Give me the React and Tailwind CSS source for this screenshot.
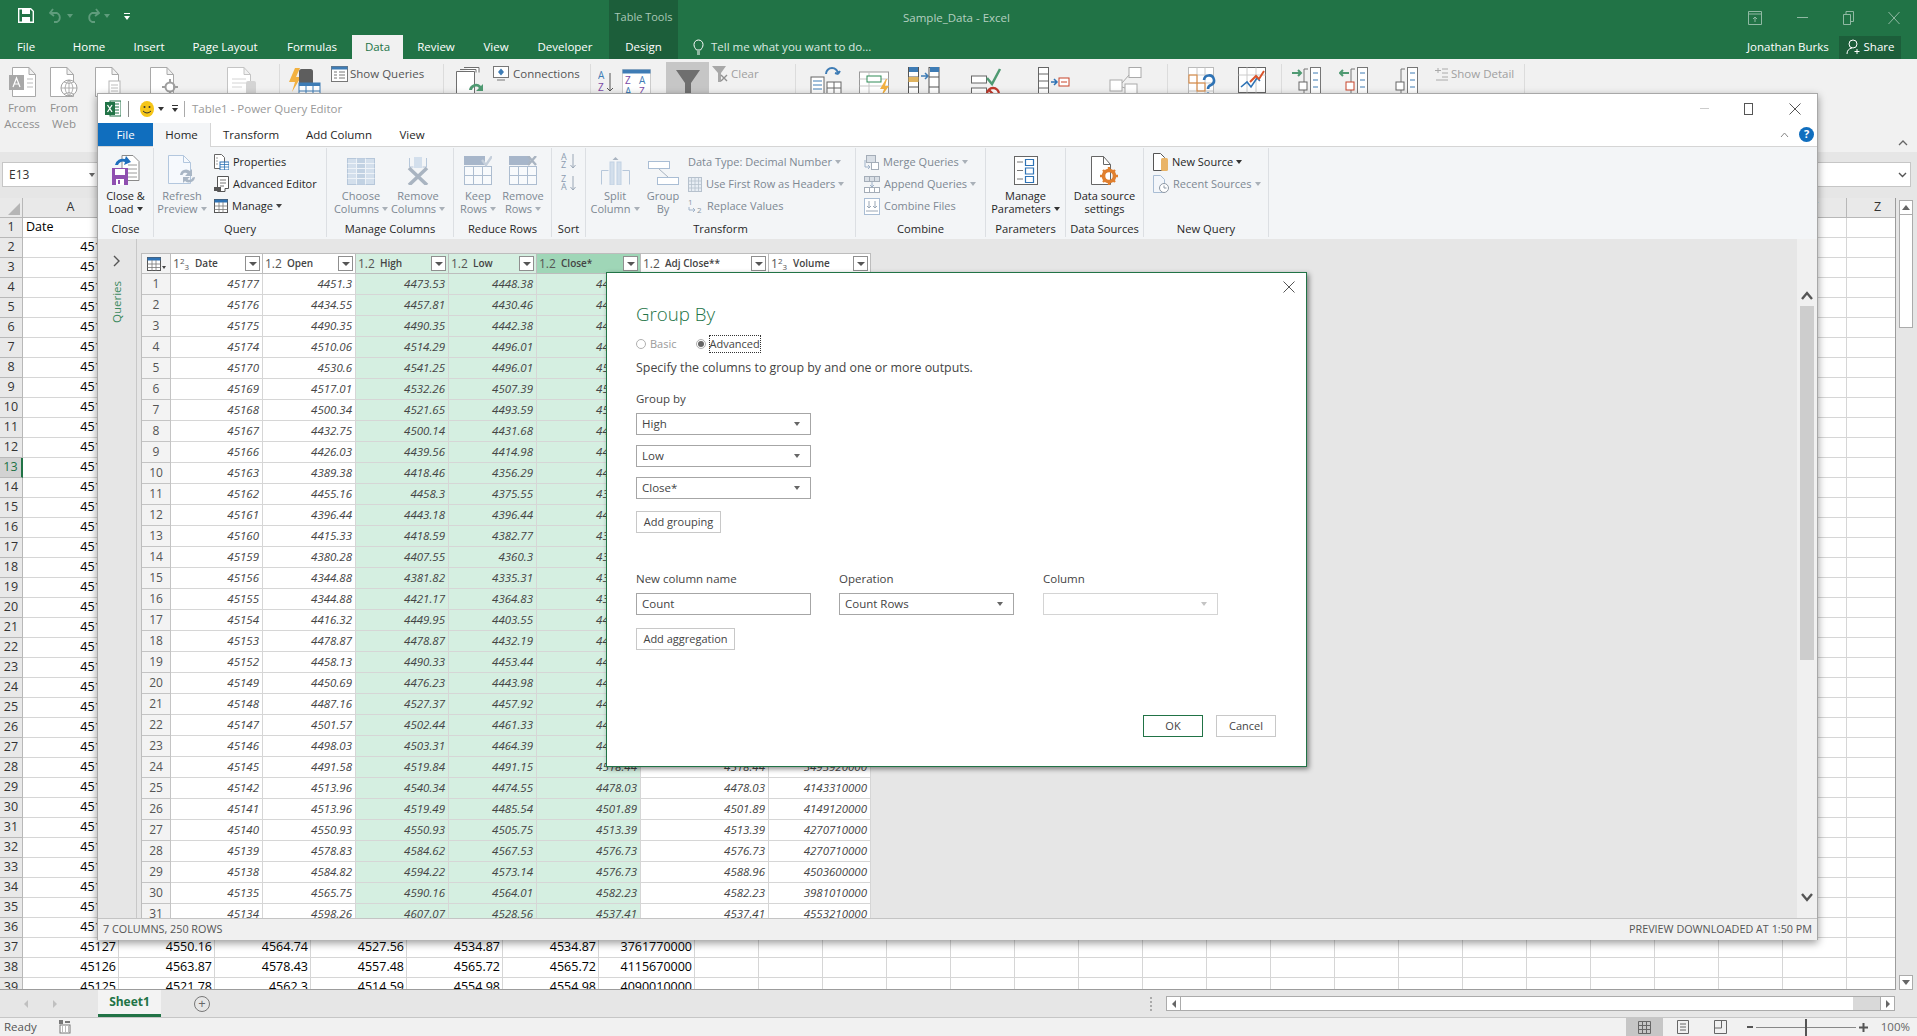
import React from 'react';

// Power Query "Group By" dialog on top of Excel

const gridRows = [
  [45177, '4451.3', '4473.53', '4448.38', '4457.49', '4457.49', '3259290000'],
  [45176, '4434.55', '4457.81', '4430.46', '4451.14', '4451.14', '3763760000'],
  [45175, '4490.35', '4490.35', '4442.38', '4465.48', '4465.48', '3306140000'],
  [45174, '4510.06', '4514.29', '4496.01', '4496.83', '4496.83', '3526250000'],
  [45170, '4530.6', '4541.25', '4496.01', '4515.77', '4515.77', '3246260000'],
  [45169, '4517.01', '4532.26', '4507.39', '4507.66', '4507.66', '4244900000'],
  [45168, '4500.34', '4521.65', '4493.59', '4514.87', '4514.87', '3064110000'],
  [45167, '4432.75', '4500.14', '4431.68', '4497.63', '4497.63', '3354820000'],
  [45166, '4426.03', '4439.56', '4414.98', '4433.31', '4433.31', '2957230000'],
  [45163, '4389.38', '4418.46', '4356.29', '4405.71', '4405.71', '3296180000'],
  [45162, '4455.16', '4458.3', '4375.55', '4376.31', '4376.31', '3723470000'],
  [45161, '4396.44', '4443.18', '4396.44', '4436.01', '4436.01', '3837270000'],
  [45160, '4415.33', '4418.59', '4382.77', '4387.55', '4387.55', '3522760000'],
  [45159, '4380.28', '4407.55', '4360.3', '4399.77', '4399.77', '3726850000'],
  [45156, '4344.88', '4381.82', '4335.31', '4369.71', '4369.71', '3940400000'],
  [45155, '4344.88', '4421.17', '4364.83', '4370.36', '4370.36', '3936770000'],
  [45154, '4416.32', '4449.95', '4403.55', '4404.33', '4404.33', '3753290000'],
  [45153, '4478.87', '4478.87', '4432.19', '4437.86', '4437.86', '3610950000'],
  [45152, '4458.13', '4490.33', '4453.44', '4489.72', '4489.72', '3193760000'],
  [45149, '4450.69', '4476.23', '4443.98', '4464.05', '4464.05', '3753290000'],
  [45148, '4487.16', '4527.37', '4457.92', '4468.83', '4468.83', '4107360000'],
  [45147, '4501.57', '4502.44', '4461.33', '4467.71', '4467.71', '3803100000'],
  [45146, '4498.03', '4503.31', '4464.39', '4499.38', '4499.38', '3884910000'],
  [45145, '4491.58', '4519.84', '4491.15', '4518.44', '4518.44', '3493920000'],
  [45142, '4513.96', '4540.34', '4474.55', '4478.03', '4478.03', '4143310000'],
  [45141, '4513.96', '4519.49', '4485.54', '4501.89', '4501.89', '4149120000'],
  [45140, '4550.93', '4550.93', '4505.75', '4513.39', '4513.39', '4270710000'],
  [45139, '4578.83', '4584.62', '4567.53', '4576.73', '4576.73', '4270710000'],
  [45138, '4584.82', '4594.22', '4573.14', '4576.73', '4588.96', '4503600000'],
  [45135, '4565.75', '4590.16', '4564.01', '4582.23', '4582.23', '3981010000'],
  [45134, '4598.26', '4607.07', '4528.56', '4537.41', '4537.41', '4553210000'],
];

const sheetTail = {
  37: ['45127', '4550.16', '4564.74', '4527.56', '4534.87', '4534.87', '3761770000'],
  38: ['45126', '4563.87', '4578.43', '4557.48', '4565.72', '4565.72', '4115670000'],
  39: ['45125', '4521.78', '4562.3', '4514.59', '4554.98', '4554.98', '4090010000'],
};

const letters = 'ABCDEFGHIJKLMNOPQRSTUVWXYZ'.split('');

const Caret = ({ c = '#444' }) => (
  <svg width="6" height="4" viewBox="0 0 6 4" className="ml-[3px] inline-block shrink-0 align-middle">
    <path d="M0 0h6L3 4z" fill={c} />
  </svg>
);

/* ---------- Excel ribbon drawings ---------- */
const PageOutline = ({ w = 24, h = 30, c = '#a9a9a9', fill = '#fff' }) => (
  <path d={`M.5.5H${w - 7}L${w - .5} 7.5V${h - .5}H.5Z M${w - 7} .5V7.5H${w - .5}`} fill={fill} stroke={c} />
);

const FromAccess = () => (
  <svg width="27" height="30" viewBox="0 0 27 30">
    <g transform="translate(3 0)"><PageOutline /></g>
    <rect y="8" width="15" height="15" fill="#a8a8a8" />
    <path d="M4 20 7.5 11 11 20M5.5 17h4" stroke="#fff" strokeWidth="1.2" fill="none" />
    <path d="M18 12h6M18 16h6M18 20h6" stroke="#bbb" />
  </svg>
);
const FromWeb = () => (
  <svg width="29" height="30" viewBox="0 0 29 30">
    <PageOutline />
    <circle cx="19" cy="21" r="8" fill="#fff" stroke="#a0a0a0" />
    <path d="M11 21h16M19 13v16M14 15q5 3 10 0M14 27q5-3 10 0M19 13q-8 8 0 16q8-8 0-16" stroke="#a0a0a0" fill="none" strokeWidth=".8" />
  </svg>
);
const FromText = () => (
  <svg width="27" height="30" viewBox="0 0 27 30">
    <PageOutline />
    <rect x="14" y="14" width="11" height="14" fill="#fff" stroke="#b5b5b5" />
    <path d="M16 18h7M16 21h7M16 24h7" stroke="#bdbdbd" />
  </svg>
);
const FromOther = () => (
  <svg width="28" height="30" viewBox="0 0 28 30">
    <PageOutline />
    <circle cx="20" cy="20" r="4.5" fill="none" stroke="#9f9f9f" strokeWidth="2" />
    <path d="M20 12v3M20 25v3M12 20h3M25 20h3" stroke="#9f9f9f" strokeWidth="2" />
  </svg>
);
const Existing = () => (
  <svg width="30" height="30" viewBox="0 0 30 30">
    <PageOutline c="#c4c4c4" />
    <path d="M5 12h14M5 16h14M5 20h10" stroke="#d4d4d4" />
    <rect x="19" y="14" width="10" height="15" rx="2" fill="#d4d4d4" />
  </svg>
);
const NewQuery = () => (
  <svg width="33" height="30" viewBox="0 0 33 30">
    <path d="M7 1 1 15h6l-3 10 9-15H8l4-9z" fill="#f2b141" />
    <rect x="11" y="2" width="14" height="18" rx="2.5" fill="#5e5e5e" />
    <rect x="11" y="16" width="21" height="14" fill="#fff" stroke="#3e7cb5" />
    <rect x="11" y="16" width="21" height="3" fill="#3e7cb5" />
    <path d="M18 19v11M25 19v11M11 24h21" stroke="#3e7cb5" />
  </svg>
);
const ShowQ = () => (
  <svg width="17" height="16" viewBox="0 0 17 16">
    <rect x=".5" y=".5" width="16" height="15" fill="#fff" stroke="#777" />
    <rect x=".5" y=".5" width="16" height="3" fill="#3e7cb5" />
    <path d="M3 6h3M3 9h3M3 12h3M8 6h6M8 9h6M8 12h6" stroke="#777" />
  </svg>
);
const RefreshAll = () => (
  <svg width="31" height="30" viewBox="0 0 31 30">
    <path d="M.5 4.5h18v25H.5zM4 2.5h16v3M8 .5h15v5" fill="#fff" stroke="#6f6f6f" />
    <path d="M13 23a7 7 0 0 1 12-4l2-2v7h-7l3-3a4 4 0 0 0-7 2z" fill="#4f9a72" />
  </svg>
);
const Conn = () => (
  <svg width="16" height="15" viewBox="0 0 16 15">
    <rect x=".5" y=".5" width="15" height="11" fill="#fff" stroke="#777" />
    <path d="M8 2.5 11 6 8 9.5 5 6z" fill="#3e7cb5" />
    <path d="M4 14h8" stroke="#777" />
  </svg>
);
const SortAz = () => (
  <svg width="16" height="26" viewBox="0 0 16 26">
    <text x="0" y="10" fontSize="10" fontFamily="Open Sans" fill="#3e7cb5">A</text>
    <text x="0" y="22" fontSize="10" fontFamily="Open Sans" fill="#7a4aa5">Z</text>
    <path d="M12 4v18M9 19l3 3 3-3" stroke="#555" fill="none" />
  </svg>
);
const SortBox = () => (
  <svg width="29" height="28" viewBox="0 0 29 28">
    <rect x=".5" y=".5" width="28" height="27" fill="#fff" stroke="#ccc" />
    <rect x=".5" y=".5" width="28" height="4" fill="#3e7cb5" />
    <text x="3" y="15" fontSize="10" fontFamily="Open Sans" fill="#7a4aa5">Z</text>
    <text x="3" y="26" fontSize="10" fontFamily="Open Sans" fill="#3e7cb5">A</text>
    <text x="17" y="15" fontSize="10" fontFamily="Open Sans" fill="#3e7cb5">A</text>
    <text x="17" y="26" fontSize="10" fontFamily="Open Sans" fill="#7a4aa5">Z</text>
  </svg>
);
const Funnel = () => (
  <svg width="28" height="30" viewBox="0 0 28 30">
    <path d="M2 2h24L17 15v15h-6V15z" fill="#6f6f6f" />
  </svg>
);
const ClearF = () => (
  <svg width="16" height="16" viewBox="0 0 16 16">
    <path d="M0 0h14L9 7v9H6V7z" fill="#a8a8a8" />
    <path d="M9 9l6 6M15 9l-6 6" stroke="#8f8f8f" strokeWidth="1.4" />
  </svg>
);
const DataTool = ({ kind }) => {
  if (kind === 'text') return (
    <svg width="34" height="30" viewBox="0 0 34 30">
      <path d="M16 7a6 6 0 0 1 12 0M28 7l-3-1M28 7l2-3" stroke="#3e7cb5" strokeWidth="2" fill="none" />
      <rect x="1" y="10" width="13" height="19" fill="#fff" stroke="#666" />
      <path d="M3 14h9M3 18h9M3 22h9" stroke="#3e7cb5" />
      <rect x="17" y="15" width="14" height="12" fill="#fff" stroke="#666" />
      <path d="M17 21h14M24 15v12" stroke="#666" />
    </svg>
  );
  if (kind === 'flash') return (
    <svg width="32" height="30" viewBox="0 0 32 30">
      <rect x=".5" y="5" width="29" height="24" fill="#fff" stroke="#999" />
      <path d="M.5 12h29M.5 19h29M10 5v24" stroke="#c5c5c5" />
      <rect x="8" y="9" width="14" height="6" fill="#fff" stroke="#2e8b57" />
      <path d="M27 12l-6 10h4l-3 8 8-11h-4l2-7z" fill="#f2b141" />
    </svg>
  );
  if (kind === 'dupes') return (
    <svg width="34" height="30" viewBox="0 0 34 30">
      <rect x=".5" y=".5" width="10" height="29" fill="#fff" stroke="#555" />
      <path d="M.5 10h10M.5 20h10" stroke="#555" />
      <rect x=".5" y="10" width="10" height="5" fill="#e0b460" />
      <path d="M13 9h7M17 6l3 3-3 3" stroke="#3e7cb5" strokeWidth="1.5" fill="none" />
      <rect x="21" y=".5" width="10" height="29" fill="#fff" stroke="#555" />
      <path d="M21 10h10M21 20h10" stroke="#555" />
      <rect x="1" y="0" width="9" height="5" fill="#3e7cb5" />
      <rect x="22" y="0" width="9" height="5" fill="#3e7cb5" />
    </svg>
  );
  if (kind === 'valid') return (
    <svg width="31" height="30" viewBox="0 0 31 30">
      <rect x=".5" y="9" width="15" height="7" fill="#fff" stroke="#666" />
      <path d="M16 11l5 6 8-15" stroke="#4f9a72" strokeWidth="2.5" fill="none" />
      <rect x=".5" y="21" width="15" height="7" fill="#fff" stroke="#666" />
      <circle cx="22" cy="27" r="6" fill="#fff" stroke="#c0392b" strokeWidth="2.4" />
      <path d="M18 23l8 8" stroke="#c0392b" strokeWidth="2.4" />
    </svg>
  );
  if (kind === 'consol') return (
    <svg width="32" height="30" viewBox="0 0 32 30">
      <rect x=".5" y=".5" width="10" height="29" fill="#fff" stroke="#666" />
      <path d="M.5 7h10M.5 14h10M.5 21h10" stroke="#666" />
      <path d="M13 15h6M16 12l3 3-3 3" stroke="#2f73b5" strokeWidth="1.5" fill="none" />
      <rect x="21" y="11" width="10" height="8" fill="#fff" stroke="#c8442b" />
      <path d="M23 15h6" stroke="#c8442b" />
    </svg>
  );
  return (
    <svg width="33" height="30" viewBox="0 0 33 30">
      <rect x="20" y=".5" width="12" height="10" fill="#fff" stroke="#aaa" />
      <rect x="1" y="13" width="12" height="11" fill="#fff" stroke="#aaa" />
      <rect x="16" y="17" width="12" height="13" fill="#fff" stroke="#aaa" />
      <path d="M13 16 20 8M13 20l3 1" stroke="#aaa" />
    </svg>
  );
};
const WhatIf = () => (
  <svg width="28" height="30" viewBox="0 0 28 30">
    <rect x=".5" y=".5" width="25" height="29" fill="#fff" stroke="#bbb" />
    <path d="M.5 8h25M.5 16h25M.5 24h25M9 .5v29M17 .5v29" stroke="#c8c8c8" />
    <rect x="1" y="8" width="8" height="8" fill="none" stroke="#e0883a" />
    <rect x="9" y="16" width="8" height="8" fill="none" stroke="#e0883a" />
    <path d="M16 13a5 5 0 1 1 7 5q-3 1-3 4" stroke="#2f73b5" strokeWidth="2.6" fill="none" />
    <circle cx="20" cy="27" r="1.8" fill="#2f73b5" />
  </svg>
);
const Forecast = () => (
  <svg width="28" height="30" viewBox="0 0 28 30">
    <rect x=".5" y=".5" width="27" height="25" fill="#fff" stroke="#666" />
    <path d="M.5 8h27M9 .5v25M18 .5v25" stroke="#ccc" />
    <path d="M3 20l6-5 4 5 6-9 3 3" stroke="#2f73b5" strokeWidth="1.6" fill="none" />
    <path d="M12 15l6-6 3 3 5-8" stroke="#d9542b" strokeWidth="2" fill="none" />
    <path d="M8 26l-3 4M20 26l-3 4" stroke="#666" />
  </svg>
);
const Outline = ({ kind }) => {
  const col = kind === 'sub' ? '#aaa' : '#4f9a72';
  return (
    <svg width="30" height="30" viewBox="0 0 30 30">
      {kind === 'group' && <path d="M0 6h9M6 3l3 3-3 3" stroke={col} strokeWidth="2" fill="none" />}
      {kind === 'ungroup' && <path d="M10 6H1M4 3 1 6l3 3" stroke={col} strokeWidth="2" fill="none" />}
      <path d="M12 2h4M12 2v28" stroke="#777" fill="none" />
      <rect x="18.5" y=".5" width="10" height="29" fill="#fff" stroke="#777" />
      <path d="M21 6h5M21 13h5M21 20h5M21 27h5" stroke="#3e7cb5" />
      <rect x="7" y="15" width="8" height="8" fill="#fff" stroke={kind === 'ungroup' ? '#c8442b' : '#666'} />
    </svg>
  );
};

const ExcelCol = ({ className, icon, lines }) => (
  <div className={`flex flex-col items-center ${className}`}>
    <div className="flex h-[33px] items-start">{icon}</div>
    {lines.map((l) => (
      <div key={l} className="h-[16px] text-[11.5px] leading-[16px] text-[#8f8f8f]">{l}</div>
    ))}
  </div>
);
const RibDiv = ({ className }) => <div className={`h-[84px] w-px shrink-0 bg-[#dcdcdc] ${className}`} />;

const ExcelRibbon = () => (
  <div className="relative flex h-[93px] items-start bg-[#f1f1f1] pt-[8px]">
    <ExcelCol className="w-[44px]" icon={<FromAccess />} lines={['From', 'Access']} />
    <ExcelCol className="w-[40px]" icon={<FromWeb />} lines={['From', 'Web']} />
    <div className="ml-[11px] w-[55px] shrink-0"><FromText /></div>
    <div className="w-[77px] shrink-0"><FromOther /></div>
    <div className="w-[52px] shrink-0"><Existing /></div>
    <RibDiv className="-mt-[3px]" />
    <div className="ml-[8px] w-[43px] shrink-0"><NewQuery /></div>
    <div className="-mt-[2px] w-[112px] shrink-0">
      <div className="flex items-center gap-[2px] text-[11.5px] text-[#555]"><ShowQ /><span>Show Queries</span></div>
    </div>
    <RibDiv className="-mt-[3px]" />
    <div className="ml-[12px] w-[37px] shrink-0"><RefreshAll /></div>
    <div className="-mt-[2px] w-[97px] shrink-0">
      <div className="flex items-center gap-[4px] text-[11.5px] text-[#555]"><Conn /><span>Connections</span></div>
    </div>
    <RibDiv className="-mt-[3px]" />
    <div className="ml-[7px] mt-[2px] w-[24px] shrink-0"><SortAz /></div>
    <div className="mt-[2px] w-[44px] shrink-0"><SortBox /></div>
    <div className="-mt-[5px] flex h-[40px] w-[43px] shrink-0 items-start justify-center bg-[#c6c6c6] pt-[6px]"><Funnel /></div>
    <div className="-mt-[2px] ml-[3px] w-[83px] shrink-0">
      <div className="flex items-center gap-[3px] text-[11.5px] text-[#a0a0a0]"><ClearF /><span>Clear</span></div>
    </div>
    <RibDiv className="-mt-[3px]" />
    <div className="ml-[14px] w-[49px] shrink-0"><DataTool kind="text" /></div>
    <div className="w-[49px] shrink-0"><DataTool kind="flash" /></div>
    <div className="w-[63px] shrink-0"><DataTool kind="dupes" /></div>
    <div className="w-[67px] shrink-0"><DataTool kind="valid" /></div>
    <div className="w-[71px] shrink-0"><DataTool kind="consol" /></div>
    <div className="w-[58px] shrink-0"><DataTool kind="rel" /></div>
    <RibDiv className="-mt-[3px]" />
    <div className="ml-[20px] w-[50px] shrink-0"><WhatIf /></div>
    <div className="w-[43px] shrink-0"><Forecast /></div>
    <RibDiv className="-mt-[3px]" />
    <div className="ml-[10px] w-[47px] shrink-0"><Outline kind="group" /></div>
    <div className="w-[50px] shrink-0"><Outline kind="ungroup" /></div>
    <div className="w-[45px] shrink-0"><Outline kind="sub" /></div>
    <div className="-mt-[2px] w-[90px] shrink-0">
      <div className="flex items-center gap-[3px] text-[11.5px] text-[#a0a0a0]">
        <svg width="14" height="14" viewBox="0 0 14 14"><path d="M4 1v5M1 3.5h6M8 2h6M8 6h6M8 10h6M2 13h12" stroke="#aaa" /></svg>
        <span>Show Detail</span>
      </div>
    </div>
    <RibDiv className="-mt-[3px]" />
    <svg width="10" height="6" viewBox="0 0 10 6" className="absolute right-[9px] top-[81px]"><path d="M1 5l4-4 4 4" stroke="#666" strokeWidth="1.3" fill="none" /></svg>
  </div>
);

/* ---------- Excel title + tabs ---------- */
const ExcelTab = ({ className, children, active }) => (
  <div className={`flex h-full shrink-0 items-center justify-center text-[11.5px] ${active ? 'bg-[#f1f1f1] text-[#217346]' : 'text-white'} ${className}`}>{children}</div>
);

const ExcelHeader = () => (
  <div className="flex h-[59px] bg-[#217346]">
    <div className="flex w-[609px] shrink-0 flex-col">
      <div className="flex h-[35px] items-start pl-[18px] pt-[8px]">
        <svg width="16" height="15" viewBox="0 0 16 15">
          <path d="M.7.7h12l2.6 2.6V14.3H.7z" fill="none" stroke="#fff" strokeWidth="1.4" />
          <rect x="4" y="1" width="8" height="5" fill="#fff" />
          <rect x="4" y="9" width="8" height="5" fill="#fff" />
        </svg>
        <svg width="14" height="15" viewBox="0 0 14 15" className="ml-[15px]"><path d="M4 1 1 5l4 3M1 5h7a5 5 0 0 1 0 9H5" stroke="#5f9c7c" strokeWidth="1.8" fill="none" /></svg>
        <svg width="6" height="4" viewBox="0 0 6 4" className="ml-[4px] mt-[6px]"><path d="M0 0h6L3 4z" fill="#5f9c7c" /></svg>
        <svg width="14" height="15" viewBox="0 0 14 15" className="ml-[13px]"><path d="M10 1l3 4-4 3M13 5H6a5 5 0 0 0 0 9h3" stroke="#5f9c7c" strokeWidth="1.8" fill="none" /></svg>
        <svg width="6" height="4" viewBox="0 0 6 4" className="ml-[4px] mt-[6px]"><path d="M0 0h6L3 4z" fill="#5f9c7c" /></svg>
        <svg width="6" height="7" viewBox="0 0 6 7" className="ml-[14px] mt-[5px]"><path d="M0 0h6v1H0zM0 3h6L3 7z" fill="#fff" /></svg>
      </div>
      <div className="flex h-[24px]">
        <ExcelTab className="w-[52px]">File</ExcelTab>
        <div className="w-[6px]" />
        <ExcelTab className="w-[62px]">Home</ExcelTab>
        <ExcelTab className="w-[58px]">Insert</ExcelTab>
        <ExcelTab className="w-[94px]">Page Layout</ExcelTab>
        <ExcelTab className="w-[80px]">Formulas</ExcelTab>
        <ExcelTab className="w-[51px]" active>Data</ExcelTab>
        <ExcelTab className="w-[66px]">Review</ExcelTab>
        <ExcelTab className="w-[54px]">View</ExcelTab>
        <ExcelTab className="w-[84px]">Developer</ExcelTab>
      </div>
    </div>
    <div className="flex w-[69px] shrink-0 flex-col bg-[#1c5e3a]">
      <div className="flex h-[35px] items-center justify-center text-[11px] text-[#a9c8b6]">Table Tools</div>
      <div className="flex h-[24px] items-center justify-center text-[11.5px] text-white">Design</div>
    </div>
    <div className="flex flex-1 flex-col">
      <div className="flex h-[35px] items-center">
        <div className="ml-[225px] w-[845px] text-[11.5px] text-[#b5d0c1]">Sample_Data - Excel</div>
        <svg width="14" height="14" viewBox="0 0 14 14" className="opacity-50"><path d="M.5.5h13v13H.5zM.5 3h13M7 11V6M5 8l2-2 2 2" stroke="#fff" fill="none" /></svg>
        <div className="ml-[35px] h-px w-[11px] bg-white opacity-50" />
        <svg width="11" height="14" viewBox="0 0 11 14" className="ml-[35px] opacity-50"><path d="M.5 3.5h7v10h-7zM3 3.5V.5h7.5v10H7.5" stroke="#fff" fill="none" /></svg>
        <svg width="12" height="14" viewBox="0 0 12 14" className="ml-[34px] opacity-50"><path d="M.5 1l11 12M11.5 1 .5 13" stroke="#fff" fill="none" /></svg>
      </div>
      <div className="flex h-[24px] items-center">
        <svg width="11" height="17" viewBox="0 0 11 17" className="ml-[15px]"><path d="M3.5 11C2 9 1 8 1 5.5a4.5 4.5 0 0 1 9 0C10 8 9 9 7.5 11zM4 13h3M4 15h3" stroke="#fff" fill="none" /></svg>
        <div className="ml-[7px] w-[1036px] text-[11.5px] text-[#dbe9e1]">Tell me what you want to do...</div>
        <div className="w-[92px] text-[11.5px] text-white">Jonathan Burks</div>
        <div className="flex h-[23px] w-[62px] items-center justify-center gap-[3px] bg-[#1c5e3a] text-[11.5px] text-white">
          <svg width="15" height="16" viewBox="0 0 15 16"><circle cx="7" cy="5" r="4" fill="none" stroke="#fff" /><path d="M1 15q0-5 5-6M11 10v5M8.5 12.5h5" stroke="#fff" fill="none" /></svg>
          Share
        </div>
      </div>
    </div>
  </div>
);

const FormulaBar = () => (
  <div className="flex h-[46px] items-start justify-between bg-[#e6e6e6] pl-[2px] pr-[6px] pt-[10px]">
    <div className="flex h-[25px] w-[96px] items-center justify-between border border-[#c6c6c6] bg-white pl-[6px] pr-[2px] text-[12px] text-[#333]">
      E13 <Caret c="#666" />
    </div>
    <div className="flex h-[25px] w-[100px] items-center justify-end border border-[#c6c6c6] bg-white pr-[3px]">
      <svg width="9" height="6" viewBox="0 0 9 6"><path d="M1 1l3.5 3.5L8 1" stroke="#555" strokeWidth="1.4" fill="none" /></svg>
    </div>
  </div>
);

/* ---------- worksheet ---------- */
const Sheet = () => {
  const rows = [];
  for (let n = 1; n <= 39; n++) {
    const tail = sheetTail[n];
    let a = '';
    if (n >= 2 && n <= 32) a = String(gridRows[n - 2][0]);
    if (n > 32 && n <= 36) a = String([45133, 45132, 45131, 45128][n - 33]);
    rows.push(
      <React.Fragment key={n}>
        <div className={`flex items-center justify-center border-b border-[#b8b8b8] text-[12.5px] ${n === 13 ? 'border-r-2 border-r-[#217346] bg-[#d2d2d2] text-[#217346]' : 'border-r border-r-[#b8b8b8] bg-[#e9e9e9] text-[#333]'}`}>{n}</div>
        {letters.map((l, i) => (
          <div key={l} className={`flex items-center overflow-hidden whitespace-nowrap border-b border-r border-[#d6d6d6] pr-[2px] text-[12.5px] text-black ${n === 1 && i === 0 ? 'justify-start pl-[3px]' : 'justify-end'}`}>
            {n === 1 && i === 0 && 'Date'}
            {i === 0 && a}
            {tail && i < 7 && (i > 0 || !a) && tail[i]}
          </div>
        ))}
      </React.Fragment>
    );
  }
  return (
    <div className="flex h-[792px] bg-white">
      <div className="h-full w-[1896px] shrink-0 overflow-hidden border-b border-r border-[#9c9c9c]">
        <div className="grid grid-cols-[23px_repeat(7,96px)_repeat(18,64px)_62px] auto-rows-[20px]">
          <div className="flex h-[20px] items-end justify-end border-b border-r border-[#b8b8b8] bg-[#e9e9e9] p-[2px]">
            <div className="h-0 w-0 border-b-[12px] border-l-[12px] border-b-[#b5b5b5] border-l-transparent" />
          </div>
          {letters.map((l) => (
            <div key={l} className="flex items-center justify-center border-b border-r border-[#b8b8b8] bg-[#e9e9e9] text-[12.5px] text-[#333]">{l}</div>
          ))}
          {rows}
        </div>
      </div>
      <div className="flex flex-1 flex-col items-center bg-[#e6e6e6] pl-[3px] pr-[4px] pt-[2px]">
        <div className="flex h-[15px] w-full items-center justify-center border border-[#ababab] bg-white">
          <div className="h-0 w-0 border-x-[4px] border-b-[5px] border-x-transparent border-b-[#666]" />
        </div>
        <div className="h-[113px] w-full border-x border-b border-[#ababab] bg-white" />
        <div className="flex-1" />
        <div className="flex h-[15px] w-full items-center justify-center border border-[#ababab] bg-white">
          <div className="h-0 w-0 border-x-[4px] border-t-[5px] border-x-transparent border-t-[#666]" />
        </div>
      </div>
    </div>
  );
};

const SheetTabs = () => (
  <div className="flex h-[28px] items-center border-b border-[#c6c6c6] bg-[#e6e6e6]">
    <div className="ml-[24px] h-0 w-0 border-y-[4px] border-r-[4px] border-y-transparent border-r-[#c0c0c0]" />
    <div className="ml-[25px] h-0 w-0 border-y-[4px] border-l-[4px] border-l-[#c0c0c0] border-y-transparent" />
    <div className="ml-[41px] flex h-full w-[63px] items-center justify-center border-b-[3px] border-[#217346] bg-[#f3f3f3] text-[12px] font-bold text-[#217346]">Sheet1</div>
    <div className="ml-[33px] flex h-[16px] w-[16px] items-center justify-center rounded-full border border-[#777] text-[13px] leading-none text-[#666]">+</div>
    <div className="ml-[940px] flex h-[14px] w-[2px] flex-col justify-between">
      <div className="h-[2px] bg-[#aaa]" /><div className="h-[2px] bg-[#aaa]" /><div className="h-[2px] bg-[#aaa]" /><div className="h-[2px] bg-[#aaa]" />
    </div>
    <div className="ml-[14px] flex h-[15px] w-[729px] items-stretch border border-[#ababab] bg-[#d9d9d9]">
      <div className="flex w-[14px] items-center justify-center border-r border-[#ababab] bg-white">
        <div className="h-0 w-0 border-y-[4px] border-r-[4px] border-y-transparent border-r-[#666]" />
      </div>
      <div className="w-[672px] bg-white" />
      <div className="flex-1" />
      <div className="flex w-[14px] items-center justify-center border-l border-[#ababab] bg-white">
        <div className="h-0 w-0 border-y-[4px] border-l-[4px] border-l-[#666] border-y-transparent" />
      </div>
    </div>
  </div>
);

const StatusBar = () => (
  <div className="flex h-[18px] items-center bg-[#f1f1f1]">
    <span className="ml-[4px] text-[11.5px] text-[#555]">Ready</span>
    <svg width="13" height="14" viewBox="0 0 13 14" className="ml-[21px]">
      <rect x="2" y="5" width="10" height="8" fill="#fff" stroke="#777" />
      <path d="M4 7h1M7 7h1M10 7h1M4 9h1M7 9h1M10 9h1M4 11h1M7 11h1M10 11h1" stroke="#777" />
      <rect x="1" y="0" width="4" height="4" fill="#777" />
      <path d="M7 2h5" stroke="#777" strokeWidth="2" />
    </svg>
    <div className="ml-[1555px] flex h-full w-[37px] items-center justify-center bg-[#c6c6c6]">
      <svg width="13" height="13" viewBox="0 0 13 13"><path d="M.5.5h12v12H.5zM.5 4.5h12M.5 8.5h12M4.5.5v12M8.5.5v12" stroke="#666" fill="none" /></svg>
    </div>
    <svg width="12" height="14" viewBox="0 0 12 14" className="ml-[14px]"><path d="M.5.5h11v13H.5zM3 4h6M3 7h6M3 10h6" stroke="#666" fill="none" /></svg>
    <svg width="13" height="14" viewBox="0 0 13 14" className="ml-[25px]"><path d="M.5.5h12v13H.5zM.5 8h7M7.5.5V8" stroke="#666" fill="none" /></svg>
    <div className="ml-[20px] h-[2px] w-[6px] bg-[#555]" />
    <div className="relative ml-[3px] h-px w-[100px] bg-[#888]">
      <div className="absolute left-[49px] -top-[8px] h-[17px] w-[2px] bg-[#555]" />
    </div>
    <svg width="9" height="9" viewBox="0 0 9 9" className="ml-[3px]"><path d="M0 4.5h9M4.5 0v9" stroke="#555" strokeWidth="2" /></svg>
    <span className="ml-[13px] text-[11.5px] text-[#666]">100%</span>
  </div>
);

/* ---------- Power Query ribbon drawings (mostly disabled, pale blue) ---------- */
const CloseLoad = () => (
  <svg width="28" height="30" viewBox="0 0 28 30">
    <path d="M10 .5h11l6 6v19H10z" fill="#fff" stroke="#8a8a8a" />
    <path d="M16 10h9M16 14h9M16 18h9M16 22h9" stroke="#9a9a9a" />
    <path d="M3 10a8 8 0 0 1 10-6l1-3 5 6-7 3 1-3a5 5 0 0 0-7 3z" fill="#1f6fbd" />
    <rect y="13" width="16" height="17" fill="#8f4fb0" />
    <rect x="3" y="14" width="10" height="6" fill="#fff" />
    <rect x="4" y="24" width="8" height="6" fill="#fff" />
    <rect x="6" y="25" width="2" height="4" fill="#8f4fb0" />
  </svg>
);
const RefreshPrev = () => (
  <svg width="28" height="30" viewBox="0 0 28 30">
    <path d="M.5.5h15l7 7v21H.5z" fill="#f6f9fd" stroke="#b3c7de" />
    <path d="M15.5.5v7h7" fill="none" stroke="#b3c7de" />
    <path d="M12 20a6 6 0 0 1 10-4l2-2v7h-7l2.5-2.5a3 3 0 0 0-5 1.5zM27 22a6 6 0 0 1-10 4l-2 2v-6h7l-2.5 2a3 3 0 0 0 5-1.5z" fill="#a9b6c5" />
  </svg>
);
const PropIcon = () => (
  <svg width="15" height="16" viewBox="0 0 15 16">
    <path d="M.5.5h7l3 3v11H.5z" fill="#fff" stroke="#666" />
    <path d="M2.5 4h1M2.5 7h1M2.5 10h1" stroke="#444" />
    <rect x="6" y="8" width="9" height="8" fill="#fff" stroke="#2f73b5" />
    <path d="M6 10.5h9M6 13h9M10.5 8v8" stroke="#2f73b5" strokeWidth=".8" />
  </svg>
);
const EditorIcon = () => (
  <svg width="15" height="16" viewBox="0 0 15 16">
    <path d="M3.5.5h11v12H11v3H3.5z" fill="#fff" stroke="#555" />
    <path d="M6 4h6M6 7h6M6 10h4" stroke="#777" />
    <path d="M0 11h7v4H0z" fill="#555" />
  </svg>
);
const TableIcon = ({ c = '#2f73b5' }) => (
  <svg width="14" height="14" viewBox="0 0 14 14">
    <rect x=".5" y=".5" width="13" height="13" fill="#fff" stroke="#555" />
    <rect x=".5" y=".5" width="13" height="3" fill={c} />
    <path d="M.5 7h13M.5 10.5h13M5 3v11M9 3v11" stroke="#777" strokeWidth=".8" />
  </svg>
);
const ChooseCols = () => (
  <svg width="28" height="27" viewBox="0 0 28 27">
    <rect x=".5" y=".5" width="27" height="26" fill="#d3dfec" stroke="#b6c7da" />
    <rect x="9.5" y=".5" width="9" height="26" fill="#c2d2e3" />
    <path d="M.5 5.5h27M.5 10.5h27M.5 15.5h27M.5 20.5h27M9.5.5v26M18.5.5v26" stroke="#eef3f8" />
  </svg>
);
const RemoveCols = () => (
  <svg width="22" height="28" viewBox="0 0 22 28">
    <path d="M2.5 1v9h4M19.5 1v9h-4" stroke="#b6c7da" fill="none" />
    <rect x="7" y="0" width="8" height="11" fill="#d3dfec" />
    <path d="M2 28 20 11M20 28 2 11" stroke="#a9b4c1" strokeWidth="3.6" />
  </svg>
);
const RowsIcon = ({ x }) => (
  <svg width="28" height="29" viewBox="0 0 28 29">
    <rect x="0" y="0" width="21" height="9" fill="#a7b6ca" />
    <rect x=".5" y="10.5" width="27" height="18" fill="#f8fafc" stroke="#adbdd0" />
    <path d="M.5 19.5h27M9.5 10.5v18M18.5 10.5v18" stroke="#adbdd0" />
    {x ? (
      <path d="M19 0l8 9M27 0l-8 9" stroke="#a9b4c1" strokeWidth="2.4" />
    ) : (
      <path d="M18 4l4 5 6-9" stroke="#c5cfdb" strokeWidth="2.4" fill="none" />
    )}
  </svg>
);
const SortSmall = ({ top, bottom }) => (
  <div className="flex items-center gap-[1px]">
    <div className="flex w-[8px] flex-col text-[9px] leading-[8px] text-[#8c9cb0]"><span>{top}</span><span>{bottom}</span></div>
    <svg width="6" height="15" viewBox="0 0 6 15"><path d="M3 0v14M.5 11 3 14l2.5-3" stroke="#9aa7b6" fill="none" /></svg>
  </div>
);
const SplitIcon = () => (
  <svg width="29" height="28" viewBox="0 0 29 28">
    <path d="M.5 27.5v-14h7M28.5 27.5v-14h-7" stroke="#b6c7da" fill="none" />
    <rect x="9" y="5" width="4" height="23" fill="#d3dfec" stroke="#c2d2e3" />
    <rect x="16" y="5" width="4" height="23" fill="#d3dfec" stroke="#c2d2e3" />
    <path d="M11.5 3h6l-3-3z" fill="#a9b4c1" />
  </svg>
);
const GroupIcon = () => (
  <svg width="31" height="24" viewBox="0 0 31 24">
    <rect x=".5" y=".5" width="21" height="7" fill="#fff" stroke="#a9bdd4" />
    <rect x="9.5" y="16.5" width="21" height="7" fill="#fff" stroke="#a9bdd4" />
    <path d="M11 8l9 8" stroke="#a9b4c1" />
  </svg>
);
const SmallTable = () => (
  <svg width="14" height="15" viewBox="0 0 14 15">
    <rect x=".5" y=".5" width="13" height="14" fill="#e7edf4" stroke="#b6c1cd" />
    <path d="M.5 4h13M.5 7.5h13M.5 11h13M3.5.5v14M7 .5v14M10.5.5v14" stroke="#b6c1cd" strokeWidth=".8" />
  </svg>
);
const ReplaceIcon = () => (
  <svg width="15" height="16" viewBox="0 0 15 16">
    <text x="0" y="7" fontSize="8" fontFamily="Open Sans" fill="#8e98a4">1</text>
    <text x="9" y="15" fontSize="8" fontFamily="Open Sans" fill="#8e98a4">2</text>
    <path d="M1 9v3h6M5 10l2 2-2 2" stroke="#9fb2c9" fill="none" />
  </svg>
);
const MergeIcon = () => (
  <svg width="15" height="15" viewBox="0 0 15 15">
    <rect x="2.5" y=".5" width="9" height="7" fill="#d9dfe6" stroke="#a4adb8" />
    <rect x="7.5" y="7.5" width="7" height="7" fill="#fff" stroke="#a4adb8" />
    <path d="M1 5v7h5M4 10l2 2-2 2" stroke="#9fb2c9" fill="none" />
  </svg>
);
const AppendIcon = () => (
  <svg width="16" height="17" viewBox="0 0 16 17">
    <rect x=".5" y=".5" width="15" height="5" fill="#d9dfe6" stroke="#a4adb8" />
    <rect x=".5" y="11.5" width="15" height="5" fill="#fff" stroke="#a4adb8" />
    <path d="M8 6v5M6 9l2 2 2-2" stroke="#9fb2c9" fill="none" />
    <path d="M5.5.5v5M10.5.5v5M5.5 11.5v5M10.5 11.5v5" stroke="#a4adb8" />
  </svg>
);
const CombineIcon = () => (
  <svg width="16" height="17" viewBox="0 0 16 17">
    <rect x=".5" y=".5" width="15" height="16" fill="#fff" stroke="#a9bdd4" />
    <path d="M5 3v7M3 8l2 2 2-2M11 3v7M9 8l2 2 2-2M2 13h12" stroke="#9aa7b6" fill="none" />
  </svg>
);
const ParamIcon = () => (
  <svg width="24" height="29" viewBox="0 0 24 29">
    <rect x=".5" y=".5" width="23" height="28" fill="#fff" stroke="#666" />
    <path d="M3 6h6M3 14.5h6M3 23h6" stroke="#777" />
    <path d="M11.5 3.5h8v6h-8zM11.5 12h8v6h-8zM11.5 20.5h8v6h-8z" fill="none" stroke="#2f73b5" strokeWidth="1.2" />
  </svg>
);
const SourceIcon = () => (
  <svg width="27" height="29" viewBox="0 0 27 29">
    <path d="M.5.5h12l7 8v20H.5z" fill="#fff" stroke="#666" />
    <path d="M12.5.5v8h7" fill="none" stroke="#666" />
    <circle cx="18" cy="20" r="5.5" fill="none" stroke="#e07f2e" strokeWidth="3.6" />
    <path d="M18 11v3M18 26v3M9 20h3M24 20h3M12 14l2 2M22 24l2 2M24 14l-2 2M12 26l2-2" stroke="#e07f2e" strokeWidth="2.4" />
  </svg>
);
const NewSrcIcon = () => (
  <svg width="15" height="18" viewBox="0 0 15 18">
    <path d="M.5.5h7l4 4v13H.5z" fill="#fff" stroke="#555" />
    <rect x="8" y="5" width="7" height="13" rx="1.5" fill="#e9b468" />
  </svg>
);
const RecentIcon = () => (
  <svg width="16" height="18" viewBox="0 0 16 18">
    <path d="M.5.5h7l4 4v13H.5z" fill="#f3f6fa" stroke="#a9bdd4" />
    <circle cx="11" cy="13" r="4.5" fill="#fff" stroke="#8e98a4" />
    <path d="M11 10.5V13h2.5" stroke="#8e98a4" fill="none" />
  </svg>
);

const BigBtn = ({ className, icon, lines, off, caret }) => (
  <div className={`flex shrink-0 flex-col items-center ${className}`}>
    <div className="flex h-[38px] items-end justify-center pb-[1px]">{icon}</div>
    <div className={`mt-[3px] flex flex-col items-center text-[11px] leading-[13px] ${off ? 'text-[#7d8893]' : 'text-[#262626]'}`}>
      <span className="whitespace-nowrap">{lines[0]}</span>
      <span className="flex items-center whitespace-nowrap">{lines[1]}{caret && <Caret c={off ? '#a9b0b8' : '#333'} />}</span>
    </div>
  </div>
);

const SmallBtn = ({ icon, children, off, caret, gap = 'gap-[4px]' }) => (
  <div className={`flex h-[22px] items-center whitespace-nowrap text-[11px] ${gap} ${off ? 'text-[#7d8893]' : 'text-[#262626]'}`}>
    {icon}
    <span className="flex items-center">{children}{caret && <Caret c={off ? '#a9b0b8' : '#333'} />}</span>
  </div>
);

const Group = ({ className, label, children }) => (
  <div className={`flex h-[89px] shrink-0 flex-col border-r border-[#dcdfe3] ${className}`}>
    <div className="flex flex-1 items-start">{children}</div>
    <div className="h-[16px] whitespace-nowrap text-center text-[11.2px] leading-[16px] text-[#262626]">{label}</div>
  </div>
);

const PqRibbon = () => (
  <div className="flex h-[92px] shrink-0 bg-[#f3f5f7] pt-[1px]">
    <Group className="w-[56px]" label="Close">
      <BigBtn className="w-full" icon={<CloseLoad />} lines={['Close &', 'Load']} caret />
    </Group>
    <Group className="w-[173px]" label="Query">
      <BigBtn className="w-[56px]" icon={<RefreshPrev />} lines={['Refresh', 'Preview']} off caret />
      <div className="ml-[4px] mt-[3px] flex flex-col">
        <SmallBtn icon={<PropIcon />}>Properties</SmallBtn>
        <SmallBtn icon={<EditorIcon />}>Advanced Editor</SmallBtn>
        <SmallBtn icon={<TableIcon />}>Manage <Caret /></SmallBtn>
      </div>
    </Group>
    <Group className="w-[127px]" label="Manage Columns">
      <BigBtn className="ml-[3px] w-[62px]" icon={<ChooseCols />} lines={['Choose', 'Columns']} off caret />
      <BigBtn className="w-[52px]" icon={<RemoveCols />} lines={['Remove', 'Columns']} off caret />
    </Group>
    <Group className="w-[98px]" label="Reduce Rows">
      <BigBtn className="w-[48px]" icon={<RowsIcon />} lines={['Keep', 'Rows']} off caret />
      <BigBtn className="w-[42px]" icon={<RowsIcon x />} lines={['Remove', 'Rows']} off caret />
    </Group>
    <Group className="w-[34px]" label="Sort">
      <div className="flex w-full flex-col items-center gap-[6px] pt-[5px]">
        <SortSmall top="A" bottom="Z" />
        <SortSmall top="Z" bottom="A" />
      </div>
    </Group>
    <Group className="w-[270px]" label="Transform">
      <BigBtn className="w-[58px]" icon={<SplitIcon />} lines={['Split', 'Column']} off caret />
      <BigBtn className="w-[38px]" icon={<GroupIcon />} lines={['Group', 'By']} off />
      <div className="ml-[6px] mt-[3px] flex flex-col">
        <SmallBtn off caret>Data Type: Decimal Number</SmallBtn>
        <SmallBtn off caret icon={<SmallTable />}>Use First Row as Headers</SmallBtn>
        <SmallBtn off icon={<ReplaceIcon />}>Replace Values</SmallBtn>
      </div>
    </Group>
    <Group className="w-[130px]" label="Combine">
      <div className="ml-[8px] mt-[3px] flex flex-col">
        <SmallBtn off caret icon={<MergeIcon />}>Merge Queries</SmallBtn>
        <SmallBtn off caret icon={<AppendIcon />}>Append Queries</SmallBtn>
        <SmallBtn off icon={<CombineIcon />}>Combine Files</SmallBtn>
      </div>
    </Group>
    <Group className="w-[80px]" label="Parameters">
      <BigBtn className="w-full" icon={<ParamIcon />} lines={['Manage', 'Parameters']} caret />
    </Group>
    <Group className="w-[78px]" label="Data Sources">
      <BigBtn className="w-full" icon={<SourceIcon />} lines={['Data source', 'settings']} />
    </Group>
    <Group className="w-[125px]" label="New Query">
      <div className="ml-[9px] mt-[3px] flex flex-col">
        <SmallBtn icon={<NewSrcIcon />} caret>New Source</SmallBtn>
        <SmallBtn off caret icon={<RecentIcon />}>Recent Sources</SmallBtn>
      </div>
    </Group>
  </div>
);

/* ---------- Power Query data grid ---------- */
const TypeMark = ({ whole }) =>
  whole ? (
    <span className="ml-[2px] w-[18px] shrink-0 text-[12px] leading-none text-[#555]">1<sup className="text-[8px]">2</sup><sub className="text-[8px]">3</sub></span>
  ) : (
    <span className="ml-[2px] w-[18px] shrink-0 text-[12px] leading-none text-[#555]">1.2</span>
  );

const HeadCell = ({ label, whole, tint }) => (
  <div className={`flex h-[21px] items-center border-y border-r border-[#bdbdbd] ${tint}`}>
    <TypeMark whole={whole} />
    <span className="ml-[4px] flex-1 whitespace-nowrap text-[10px] font-semibold text-[#444]">{label}</span>
    <div className="mr-[2px] flex h-[15px] w-[15px] shrink-0 items-center justify-center border border-[#8f8f8f] bg-white">
      <div className="h-0 w-0 border-x-[4px] border-t-[4px] border-x-transparent border-t-[#555]" />
    </div>
  </div>
);

const DataGrid = () => (
  <div className="h-[665px] overflow-hidden">
    <div className="grid w-[730px] grid-cols-[29px_92px_93px_93px_88px_104px_128px_102px] auto-rows-[21px] border-l border-[#bdbdbd]">
      <div className="flex items-center justify-center gap-[1px] border-y border-r border-[#bdbdbd] bg-[#f3f3f3]">
        <TableIcon />
        <div className="mt-[8px] h-0 w-0 border-x-[2px] border-t-[3px] border-x-transparent border-t-[#444]" />
      </div>
      <HeadCell label="Date" whole tint="bg-white" />
      <HeadCell label="Open" tint="bg-white" />
      <HeadCell label="High" tint="bg-[#d5efe1]" />
      <HeadCell label="Low" tint="bg-[#d5efe1]" />
      <HeadCell label="Close*" tint="bg-[#9fd6b7]" />
      <HeadCell label="Adj Close**" tint="bg-white" />
      <HeadCell label="Volume" whole tint="bg-white" />
      {gridRows.map((r, i) => (
        <React.Fragment key={r[0]}>
          <div className="flex items-center justify-center border-b border-r border-[#c4c4c4] bg-[#f3f3f3] text-[12px] text-[#555]">{i + 1}</div>
          {r.map((v, j) => (
            <div key={j} className={`flex items-center justify-end border-b border-r border-[#d6d6d6] pr-[3px] text-[11.5px] italic text-[#444] ${j >= 2 && j <= 4 ? 'bg-[#d5efe1]' : 'bg-white'}`}>{v}</div>
          ))}
        </React.Fragment>
      ))}
    </div>
  </div>
);

/* ---------- dialog ---------- */
const Select = ({ value, className = 'border-[#a6a6a6]', caret = 'border-t-[#666]' }) => (
  <div className={`flex h-[22px] w-[175px] items-center justify-between border bg-white pl-[5px] pr-[10px] text-[11.5px] text-[#444] ${className}`}>
    <span>{value}</span>
    <div className={`h-0 w-0 border-x-[3px] border-t-[4px] border-x-transparent ${caret}`} />
  </div>
);

const DlgBtn = ({ children, className }) => (
  <div className={`flex h-[22px] items-center justify-center border bg-white text-[11px] text-[#444] ${className}`}>{children}</div>
);

const GroupByDialog = () => (
  <div className="absolute left-[508px] top-[178px] h-[495px] w-[701px] border border-[#217346] bg-white pl-[29px] pt-[28px] shadow-[2px_2px_5px_rgba(0,0,0,0.45)]">
    <svg width="12" height="12" viewBox="0 0 12 12" className="absolute right-[11px] top-[8px]"><path d="M.5.5l11 11M11.5.5l-11 11" stroke="#555" /></svg>
    <div className="h-[26px] text-[18.7px] font-light leading-[26px] text-[#217346]">Group By</div>
    <div className="mt-[7px] flex h-[20px] items-center text-[11px]">
      <div className="h-[10px] w-[10px] rounded-full border border-[#b0b0b0]" />
      <span className="ml-[4px] text-[#9a9a9a]">Basic</span>
      <div className="ml-[19px] flex h-[10px] w-[10px] items-center justify-center rounded-full border border-[#b0b0b0]">
        <div className="h-[6px] w-[6px] rounded-full bg-[#666]" />
      </div>
      <span className="ml-[3px] border border-dotted border-[#333] text-[#444]">Advanced</span>
    </div>
    <div className="mt-[5px] h-[18px] text-[12.4px] leading-[18px] text-[#444]">Specify the columns to group by and one or more outputs.</div>
    <div className="mt-[13px] h-[18px] text-[11.5px] leading-[18px] text-[#444]">Group by</div>
    <div className="mt-[5px] flex flex-col gap-[10px]">
      <Select value="High" />
      <Select value="Low" />
      <Select value="Close*" />
    </div>
    <DlgBtn className="mt-[12px] w-[85px] border-[#c8c8c8]">Add grouping</DlgBtn>
    <div className="mt-[37px] grid grid-cols-[203px_204px_175px]">
      <div>
        <div className="h-[18px] text-[11.5px] leading-[18px] text-[#444]">New column name</div>
        <div className="mt-[5px] flex h-[22px] w-[175px] items-center border border-[#a6a6a6] pl-[5px] text-[11.5px] text-[#444]">Count</div>
      </div>
      <div>
        <div className="h-[18px] text-[11.5px] leading-[18px] text-[#444]">Operation</div>
        <div className="mt-[5px]"><Select value="Count Rows" /></div>
      </div>
      <div>
        <div className="h-[18px] text-[11.5px] leading-[18px] text-[#444]">Column</div>
        <div className="mt-[5px]"><Select value="" className="border-[#d4d4d4]" caret="border-t-[#c4c4c4]" /></div>
      </div>
    </div>
    <DlgBtn className="mt-[13px] w-[99px] border-[#c8c8c8]">Add aggregation</DlgBtn>
    <div className="mr-[30px] mt-[65px] flex justify-end gap-[13px]">
      <DlgBtn className="w-[60px] border-[#217346]">OK</DlgBtn>
      <DlgBtn className="w-[60px] border-[#c8c8c8]">Cancel</DlgBtn>
    </div>
  </div>
);

/* ---------- Power Query window ---------- */
const PqWindow = () => (
  <div className="absolute left-[97px] top-[93px] flex h-[847px] w-[1721px] flex-col border-x border-t border-[#a8a8a8] bg-[#e6e6e6] shadow-[0_3px_8px_rgba(0,0,0,0.4)]">
    <div className="flex h-[29px] shrink-0 items-center bg-white pl-[7px]">
      <svg width="16" height="17" viewBox="0 0 16 17">
        <rect x="5" y="1" width="11" height="15" fill="#fff" stroke="#217346" />
        <path d="M8 4h6M8 7h6M8 10h6M8 13h6" stroke="#217346" />
        <rect y="2" width="10" height="13" fill="#217346" />
        <path d="M2.5 5 7 12M7 5l-4.5 7" stroke="#fff" strokeWidth="1.3" />
      </svg>
      <div className="ml-[7px] h-[16px] w-px bg-[#888]" />
      <svg width="16" height="16" viewBox="0 0 16 16" className="ml-[10px]">
        <ellipse cx="8" cy="8" rx="7" ry="8" fill="#f5c518" />
        <circle cx="5.5" cy="6" r="1" fill="#333" />
        <circle cx="10.5" cy="6" r="1" fill="#333" />
        <path d="M4 10q4 4 8 0" stroke="#333" fill="none" />
      </svg>
      <Caret c="#333" />
      <svg width="6" height="7" viewBox="0 0 6 7" className="ml-[8px]"><path d="M0 0h6v1H0zM0 3h6L3 7z" fill="#333" /></svg>
      <div className="ml-[6px] h-[16px] w-px bg-[#aaa]" />
      <span className="ml-[7px] text-[11.5px] text-[#999]">Table1 - Power Query Editor</span>
      <div className="ml-auto h-px w-[9px] bg-[#ccc]" />
      <div className="ml-[35px] h-[12px] w-[9px] border border-[#555]" />
      <svg width="12" height="12" viewBox="0 0 12 12" className="ml-[36px] mr-[16px]"><path d="M.5.5l11 11M11.5.5l-11 11" stroke="#555" /></svg>
    </div>
    <div className="flex h-[24px] shrink-0 border-b border-[#d5d5d5] bg-white">
      <div className="flex w-[55px] items-center justify-center bg-[#106ebe] text-[11.5px] text-white">File</div>
      <div className="flex h-[24px] w-[58px] items-center justify-center border-r border-[#d5d5d5] bg-[#f3f5f7] text-[11.5px] text-[#262626]">Home</div>
      <div className="flex w-[80px] items-center justify-center text-[11.5px] text-[#262626]">Transform</div>
      <div className="flex w-[96px] items-center justify-center text-[11.5px] text-[#262626]">Add Column</div>
      <div className="flex w-[50px] items-center justify-center text-[11.5px] text-[#262626]">View</div>
      <div className="ml-auto flex items-center pr-[3px]">
        <svg width="9" height="6" viewBox="0 0 9 6"><path d="M1 5l3.5-4L8 5" stroke="#888" fill="none" /></svg>
        <div className="ml-[10px] flex h-[15px] w-[15px] items-center justify-center rounded-full bg-[#106ebe] text-[11px] font-bold text-white">?</div>
      </div>
    </div>
    <PqRibbon />
    <div className="flex min-h-0 flex-1">
      <div className="flex w-[39px] shrink-0 flex-col items-center border-r border-[#c8c8c8] pt-[16px]">
        <svg width="8" height="12" viewBox="0 0 8 12"><path d="M1 1l5 5-5 5" stroke="#555" strokeWidth="1.4" fill="none" /></svg>
        <span className="mt-[14px] rotate-180 text-[11.5px] text-[#3d8a5f] [writing-mode:vertical-rl]">Queries</span>
      </div>
      <div className="relative min-w-0 flex-1 pl-[4px] pt-[14px]">
        <DataGrid />
      </div>
      <div className="flex w-[20px] shrink-0 flex-col items-center bg-[#f0f0f0] pb-[16px] pt-[52px]">
        <svg width="12" height="9" viewBox="0 0 12 9"><path d="M1 8l5-6 5 6" stroke="#555" strokeWidth="2.4" fill="none" /></svg>
        <div className="mt-[6px] h-[354px] w-[14px] bg-[#cdcdcd]" />
        <div className="flex-1" />
        <svg width="12" height="9" viewBox="0 0 12 9"><path d="M1 1l5 6 5-6" stroke="#555" strokeWidth="2.4" fill="none" /></svg>
      </div>
    </div>
    <div className="flex h-[22px] shrink-0 items-center justify-between border-t border-[#c4c4c4] bg-[#f0f0f0] px-[5px] text-[10.8px] text-[#555]">
      <span>7 COLUMNS, 250 ROWS</span>
      <span>PREVIEW DOWNLOADED AT 1:50 PM</span>
    </div>
    <GroupByDialog />
  </div>
);

export default function App() {
  return (
    <div className="relative flex h-[1036px] w-[1917px] flex-col overflow-hidden bg-white font-['Open_Sans',sans-serif]">
      <ExcelHeader />
      <ExcelRibbon />
      <FormulaBar />
      <Sheet />
      <SheetTabs />
      <StatusBar />
      <PqWindow />
    </div>
  );
}
